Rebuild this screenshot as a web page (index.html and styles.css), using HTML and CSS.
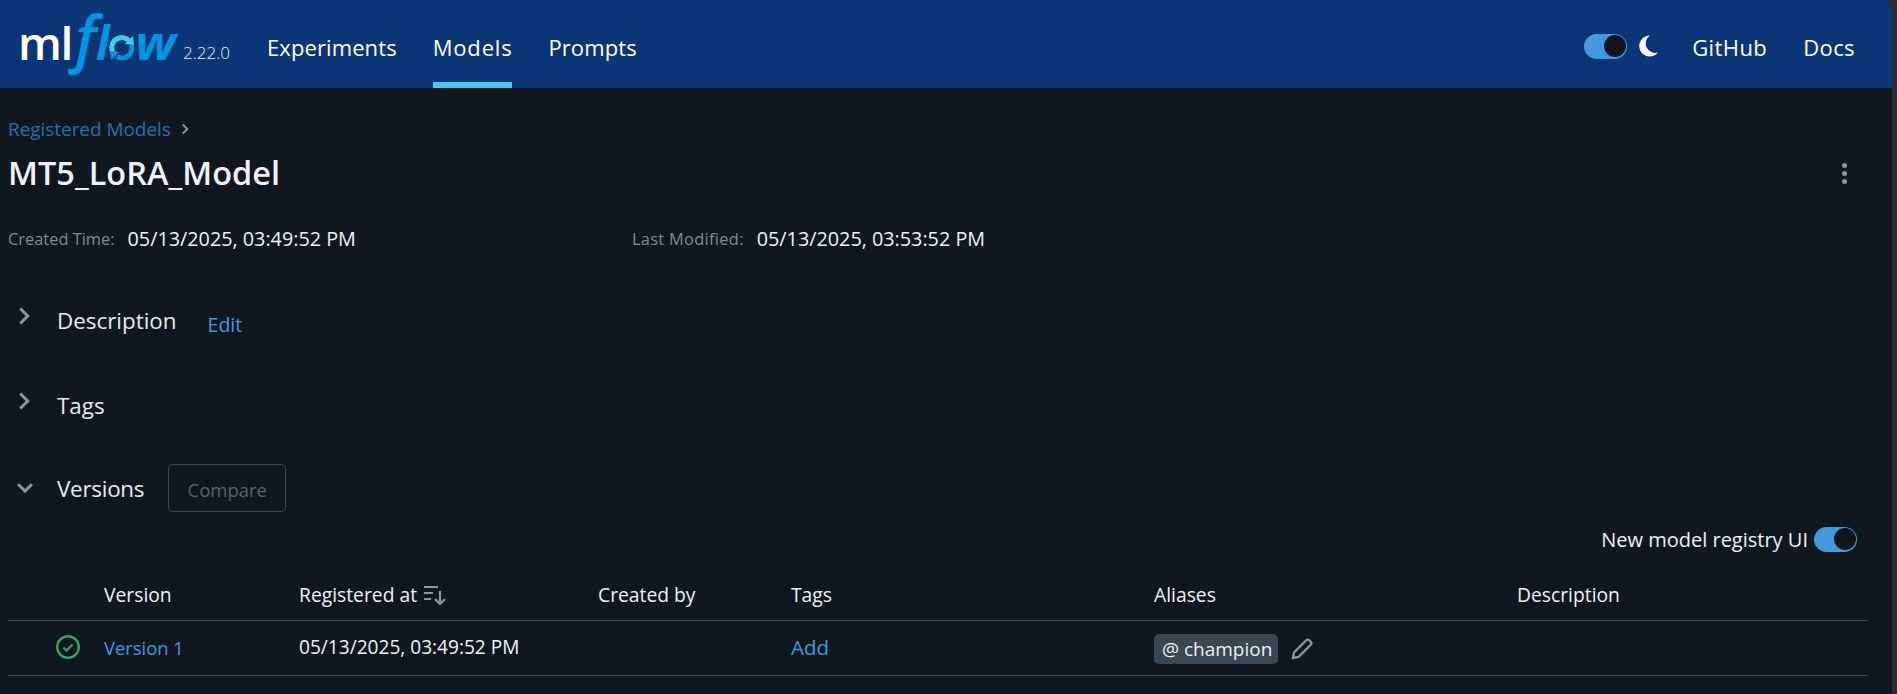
FILE: index.html
```html
<!DOCTYPE html>
<html lang="en">
<head>
<meta charset="utf-8">
<title>MT5_LoRA_Model - MLflow</title>
<link rel="stylesheet" href="styles.css">
</head>
<body>
<div class="app">
  <header class="topbar">
    <div class="brand">
      <svg class="logo" viewBox="0 0 180 88" role="img" aria-label="mlflow">
        <text class="logo-ml" x="18" y="60">ml</text>
        <text class="logo-f" x="75" y="60">f</text>
        <text class="logo-l" x="96" y="60">l</text>
        <path d="M130.200 42.300A10 10 0 0 0 113.300 53" fill="none" stroke="#43c9ed" stroke-width="5"/>
        <path d="M117 56.700A10 10 0 0 0 131.400 44.600" fill="none" stroke="#0194e2" stroke-width="5"/>
        <path d="M124.500 44l8.500-8 1 9z" fill="#43c9ed"/>
        <path d="M119.500 52l-8.500 8-1-9z" fill="#0194e2"/>
        <text class="logo-w" x="135" y="60" textLength="41" lengthAdjust="spacingAndGlyphs">w</text>
      </svg>
      <span class="version">2.22.0</span>
    </div>
    <nav class="nav">
      <a class="nav-link">Experiments</a>
      <a class="nav-link active">Models</a>
      <a class="nav-link">Prompts</a>
    </nav>
    <div class="top-right">
      <span class="switch dark"></span>
      <svg class="moon" viewBox="0 0 20 24"><path d="M11 1.500A10.500 10.500 0 1 0 19 18.500 9.500 9.500 0 0 1 11 1.500z" fill="#fff"/></svg>
      <a class="nav-link">GitHub</a>
      <a class="nav-link">Docs</a>
    </div>
  </header>
  <main class="content">
    <div class="crumbs"><a class="crumb-link">Registered Models</a><svg class="crumb-chev" viewBox="0 0 10 12"><path d="M3 2l4 4-4 4" fill="none" stroke="#8a96a3" stroke-width="1.700"/></svg></div>
    <div class="title-row">
      <h1 class="title">MT5_LoRA_Model</h1>
      <span class="kebab"><i></i><i></i><i></i></span>
    </div>
    <div class="meta">
      <div class="meta-item"><span class="meta-label">Created Time:</span><span class="meta-value">05/13/2025, 03:49:52 PM</span></div>
      <div class="meta-item"><span class="meta-label wide">Last Modified:</span><span class="meta-value">05/13/2025, 03:53:52 PM</span></div>
    </div>
    <section class="section sec-desc">
      <svg class="chev" viewBox="0 0 16 16"><path d="M5 2l6 6-6 6" fill="none" stroke="#8a96a3" stroke-width="2.400"/></svg>
      <span class="sec-title">Description</span><a class="edit">Edit</a>
    </section>
    <section class="section sec-tags">
      <svg class="chev" viewBox="0 0 16 16"><path d="M5 2l6 6-6 6" fill="none" stroke="#8a96a3" stroke-width="2.400"/></svg>
      <span class="sec-title">Tags</span>
    </section>
    <section class="section sec-versions">
      <svg class="chev" viewBox="0 0 16 16"><path d="M2.500 5l5.500 5.500 5.500-5.500" fill="none" stroke="#8a96a3" stroke-width="2.400"/></svg>
      <span class="sec-title">Versions</span><button class="compare">Compare</button>
    </section>
    <div class="ui-toggle"><span>New model registry UI</span><span class="switch"></span></div>
    <div class="table">
      <div class="tr th">
        <div></div><div>Version</div>
        <div class="reg">Registered at <svg class="sort" viewBox="0 0 22 20"><path d="M0 2h14M0 8h9M0 14h7" stroke="#8a96a3" stroke-width="2.200" fill="none"/><path d="M16 6v13M11 14l5 5 5-5" stroke="#8a96a3" stroke-width="2.200" fill="none"/></svg></div>
        <div>Created by</div><div>Tags</div><div>Aliases</div><div>Description</div>
      </div>
      <div class="tr td">
        <div class="status"><svg viewBox="0 0 24 24"><circle cx="12" cy="12" r="10.800" fill="none" stroke="#2ea561" stroke-width="2.400"/><path d="M7.500 12.500l3 3 6-6" fill="none" stroke="#2ea561" stroke-width="2.400"/></svg></div>
        <div><a class="link version-link">Version 1</a></div>
        <div class="reg-date">05/13/2025, 03:49:52 PM</div>
        <div></div>
        <div><a class="link add-link">Add</a></div>
        <div class="alias"><span class="tag">@ champion</span><svg class="pencil" viewBox="0 0 22 22"><path d="M2 20l1-5.500L15 2.500a2.500 2.500 0 0 1 3.500 0l1 1a2.500 2.500 0 0 1 0 3.500L7.500 19z" fill="none" stroke="#8a96a3" stroke-width="2.300"/></svg></div>
        <div></div>
      </div>
    </div>
  </main>
</div>
</body>
</html>
```
FILE: styles.css
```css
* { box-sizing: border-box; }
html, body { margin: 0; height: 100%; background: #2b2d30; overflow: hidden; }
body { font-family: "Open Sans", "Noto Sans", sans-serif; color: #eef1f5; }
.app { width: 1892px; height: 694px; background: #11171f; border-top-right-radius: 8px; overflow: hidden; }
a { cursor: pointer; }

.topbar { height: 88px; background: #0b3574; display: flex; align-items: stretch; }
.brand { display: flex; align-items: flex-start; width: 267px; }
.logo { width: 180px; height: 88px; flex: none; font-family: "Open Sans", sans-serif; font-weight: 700; overflow: visible; }
.logo-ml { fill: #fff; font-size: 46px; font-weight: 600; letter-spacing: -1.500px; }
.logo-f { fill: #0194e2; font-style: italic; font-size: 62px; font-weight: 600; }
.logo-l { fill: #0194e2; font-style: italic; font-size: 46px; }
.logo-w { fill: #0194e2; font-style: italic; font-size: 46px; }
.version { font-size: 17px; font-weight: 300; margin: 43px 0 0 3px; line-height: 20px; }
.nav { display: flex; gap: 36px; flex: 1; }
.nav-link { font-size: 22px; color: #fff; display: flex; align-items: center; height: 88px; padding-top: 6px; letter-spacing: .1px; }
.nav-link.active { box-shadow: inset 0 -6px 0 #43c9ed; letter-spacing: .8px; }
.top-right { display: flex; align-items: center; padding: 0 37px 0 0; gap: 36px; }
.top-right .nav-link { letter-spacing: .4px; }
.switch { width: 43px; height: 25px; border-radius: 13px; background: #4299e0; position: relative; display: inline-block; flex: none; }
.switch::after { content: ""; position: absolute; right: 1.500px; top: 1.500px; width: 22px; height: 22px; border-radius: 50%; background: #11171f; }
.top-right .switch { margin: 4px -24px 0 0; }
.moon { width: 20px; height: 24px; margin: 4px -3px 0 0; }

.content { padding: 0 8px; }
.crumbs { display: flex; align-items: center; height: 24px; margin-top: 29px; font-size: 19px; }
.crumb-link { color: #2272b4; letter-spacing: -.05px; }
.crumb-chev { width: 12px; height: 14px; margin-left: 8px; }
.title-row { display: flex; align-items: center; justify-content: space-between; margin-top: 12px; height: 40px; }
.title { margin: 0; font-size: 32.500px; font-weight: 600; line-height: 40px; }
.kebab { display: flex; flex-direction: column; gap: 3px; margin-right: 37px; }
.kebab i { width: 5px; height: 5px; border-radius: 50%; background: #8a96a3; }
.meta { display: flex; margin-top: 33px; height: 24px; align-items: center; }
.meta-item { width: 624px; display: flex; align-items: center; }
.meta-label { color: #7e8b99; font-size: 16.400px; margin-right: 13px; }
.meta-label.wide { letter-spacing: .3px; }
.meta-value { font-size: 19.800px; }

.section { display: flex; align-items: center; }
.chev { width: 20px; height: 20px; margin-left: 6px; flex: none; }
.sec-title { font-size: 22.400px; margin-left: 23px; color: #e6e9ed; }
.sec-desc { margin-top: 52px; height: 36px; }
.sec-desc .chev, .sec-tags .chev { margin-top: -8px; }
.sec-tags { margin-top: 52px; height: 30px; }
.sec-versions { margin-top: 44px; height: 48px; }
.sec-versions .chev { margin-left: 7px; }
.sec-versions .sec-title { margin-left: 22px; letter-spacing: -.25px; }
.edit { color: #4299e0; font-size: 19.500px; margin: 8px 0 0 31px; }
.compare { margin-left: 24px; width: 118px; height: 48px; background: transparent; border: 1px solid #3d4854; border-radius: 5px; color: #55626f; font-family: inherit; font-size: 18.500px; padding: 2px 0 0; }

.ui-toggle { display: flex; justify-content: flex-end; align-items: center; gap: 6px; margin: 13px 27px 0 0; height: 28px; font-size: 20px; }
.table { margin-top: 18px; width: 1860px; font-size: 19.300px; }
.tr { display: grid; grid-template-columns: 96px 195px 299px 193px 363px 363px 1fr; align-items: center; border-bottom: 1px solid #3d4854; padding-bottom: 2px; }
.th { height: 50px; font-weight: 500; }
.td { height: 55px; }
.status { padding-left: 48px; display: flex; }
.status svg { width: 24px; height: 24px; }
.link { color: #4299e0; }
.version-link { font-size: 18.400px; }
.add-link { font-size: 20.500px; }
.reg { display: flex; align-items: center; gap: 7px; }
.reg-date { font-size: 19.100px; }
.sort { width: 22px; height: 20px; }
.alias { display: flex; align-items: center; gap: 13px; padding-top: 4px; }
.tag { background: #3a4651; border-radius: 5px; height: 30px; line-height: 30px; padding: 0 6px 0 8px; font-size: 19px; }
.pencil { width: 22px; height: 22px; }
```
